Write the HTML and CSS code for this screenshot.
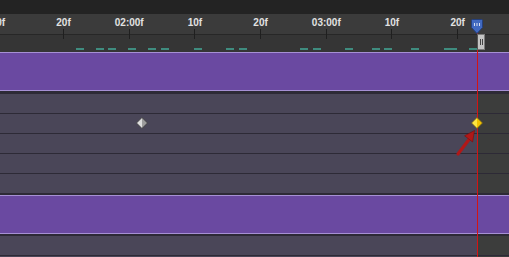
FILE: index.html
```html
<!DOCTYPE html>
<html lang="en">
<head>
    <meta charset="UTF-8">
    <title>Timeline</title>
    <link rel="stylesheet" href="styles.css">
</head>
<body>
    <div class="timeline">
        <div class="top-bar"></div>
        <div class="ruler">
            <div class="scale">
                <div class="mark"><span>10f</span><i></i></div>
                <div class="mark"><span>20f</span><i></i></div>
                <div class="mark"><span>02:00f</span><i></i></div>
                <div class="mark"><span>10f</span><i></i></div>
                <div class="mark"><span>20f</span><i></i></div>
                <div class="mark"><span>03:00f</span><i></i></div>
                <div class="mark"><span>10f</span><i></i></div>
                <div class="mark"><span>20f</span><i></i></div>
            </div>
            <!-- cached frames -->
            <div class="cache" style="left:76px"></div>
            <div class="cache" style="left:96px"></div>
            <div class="cache" style="left:108px"></div>
            <div class="cache" style="left:128px"></div>
            <div class="cache" style="left:148px"></div>
            <div class="cache" style="left:161px"></div>
            <div class="cache" style="left:194px"></div>
            <div class="cache" style="left:226px"></div>
            <div class="cache" style="left:239px"></div>
            <div class="cache" style="left:300px"></div>
            <div class="cache" style="left:313px"></div>
            <div class="cache" style="left:345px"></div>
            <div class="cache" style="left:372px"></div>
            <div class="cache" style="left:384px"></div>
            <div class="cache" style="left:411px"></div>
            <div class="cache" style="left:444px;width:13px"></div>
            <div class="cache" style="left:469px"></div>
        </div>
        <div class="tracks">
            <div class="band first"></div>
            <div class="row"><div class="row-main"></div><div class="row-out"></div></div>
            <div class="row">
                <div class="row-main">
                    <svg class="key key-gray" width="12" height="12" viewBox="0 0 12 12">
                        <polygon points="0.5,6 6,0.5 6,11.5" fill="#dedede"/>
                        <polygon points="6,0.5 11.5,6 6,11.5" fill="#9c9c9c"/>
                        <polygon points="0.5,6 6,0.5 11.5,6 6,11.5" fill="none" stroke="#3a3a3a" stroke-width="0.8"/>
                    </svg>
                    <svg class="key key-active" width="12" height="12" viewBox="0 0 12 12">
                        <polygon points="0.5,6 6,0.5 6,11.5" fill="#ffe640"/>
                        <polygon points="6,0.5 11.5,6 6,11.5" fill="#f2c200"/>
                        <polygon points="0.5,6 6,0.5 11.5,6 6,11.5" fill="none" stroke="#6a5a20" stroke-width="0.8"/>
                    </svg>
                </div>
                <div class="row-out"></div>
            </div>
            <div class="row"><div class="row-main"></div><div class="row-out"></div></div>
            <div class="row"><div class="row-main"></div><div class="row-out"></div></div>
            <div class="row"><div class="row-main"></div><div class="row-out"></div></div>
            <div class="band second"></div>
            <div class="row"><div class="row-main"></div><div class="row-out"></div></div>
            <div class="row"><div class="row-main"></div><div class="row-out"></div></div>
        </div>

        <div class="playhead-line"></div>
        <svg class="playhead-head" width="12" height="15" viewBox="0 0 12 15">
            <path d="M1.5,0.5 H10.5 Q11.5,0.5 11.5,1.5 V8.5 L6,14.5 L0.5,8.5 V1.5 Q0.5,0.5 1.5,0.5 Z" fill="#4169c0" stroke="#24407e" stroke-width="1"/>
            <rect x="3" y="4" width="1" height="3" fill="#d6def0"/>
            <rect x="5.5" y="4" width="1" height="3" fill="#d6def0"/>
            <rect x="8" y="4" width="1" height="3" fill="#d6def0"/>
        </svg>
        <div class="playhead-handle"><i></i><i></i></div>
        <svg class="pointer" width="24" height="30" viewBox="0 0 24 30">
            <line x1="4" y1="26" x2="15" y2="11.5" stroke="#b01818" stroke-width="3.2" stroke-linecap="round"/>
            <polygon points="20.5,2.5 18.6,14 10.6,7.8" fill="#b01818" stroke="#7a0c0c" stroke-width="0.6"/>
        </svg>
    </div>
</body>
</html>
```

FILE: styles.css
```css
body {
    margin: 0;
    font-family: "Liberation Sans", Arial, sans-serif;
    background-color: #232323;
    overflow: hidden;
}
.timeline {
    position: relative;
    width: 509px;
    height: 257px;
    overflow: hidden;
}
.top-bar {
    height: 14px;
    background-color: #232323;
}
.ruler {
    position: relative;
    height: 38px;
    background: linear-gradient(to bottom, #3b3b3b 0 20px, #272727 20px 21px, #353535 21px);
    overflow: hidden;
}
.scale {
    display: flex;
    margin-left: -35px;
}
.mark {
    flex: 0 0 65.7px;
    display: flex;
    flex-direction: column;
    align-items: center;
}
.mark span {
    padding-top: 3px;
    font-size: 10px;
    font-weight: bold;
    line-height: 11px;
    color: #e2e2e2;
    white-space: nowrap;
}
.mark i {
    width: 1px;
    height: 10px;
    margin-top: 1px;
    background-color: #1f1f1f;
}
.cache {
    position: absolute;
    top: 34px;
    width: 8px;
    height: 2px;
    background-color: #3f8c7f;
}
.tracks {
    display: flex;
    flex-direction: column;
    gap: 1px;
    background-color: #2d2a36;
}
.band {
    height: 37px;
    background-color: #6a49a1;
    border-top: 1px solid #a690d4;
    border-bottom: 1px solid #a690d4;
}
.band.first {
    margin-bottom: 2px;
}
.band.second {
    margin: 1px 0;
}
.row {
    display: flex;
    height: 19px;
    flex-shrink: 0;
}
.row-main {
    position: relative;
    flex: 1;
    background-color: #4a4658;
}
.row-out {
    width: 31px;
    background-color: #3c3d3c;
}
.key {
    position: absolute;
    top: 3px;
    z-index: 2;
}
.key-gray {
    left: 136px;
}
.key-active {
    left: 471px;
}
.playhead-line {
    position: absolute;
    left: 477px;
    top: 33px;
    bottom: 0;
    width: 1px;
    background-color: #d41414;
    z-index: 1;
}
.playhead-head {
    position: absolute;
    left: 471px;
    top: 19px;
    z-index: 3;
}
.playhead-handle {
    position: absolute;
    left: 477px;
    top: 34px;
    width: 4px;
    height: 14px;
    padding: 0 1px;
    display: flex;
    justify-content: space-around;
    align-items: center;
    background-color: #c4c4c4;
    border: 1px solid #7a7a7a;
    border-left-color: #555;
    z-index: 3;
}
.playhead-handle i {
    width: 1px;
    height: 6px;
    background-color: #444;
}
.pointer {
    position: absolute;
    left: 454px;
    top: 128px;
    z-index: 3;
}
```
